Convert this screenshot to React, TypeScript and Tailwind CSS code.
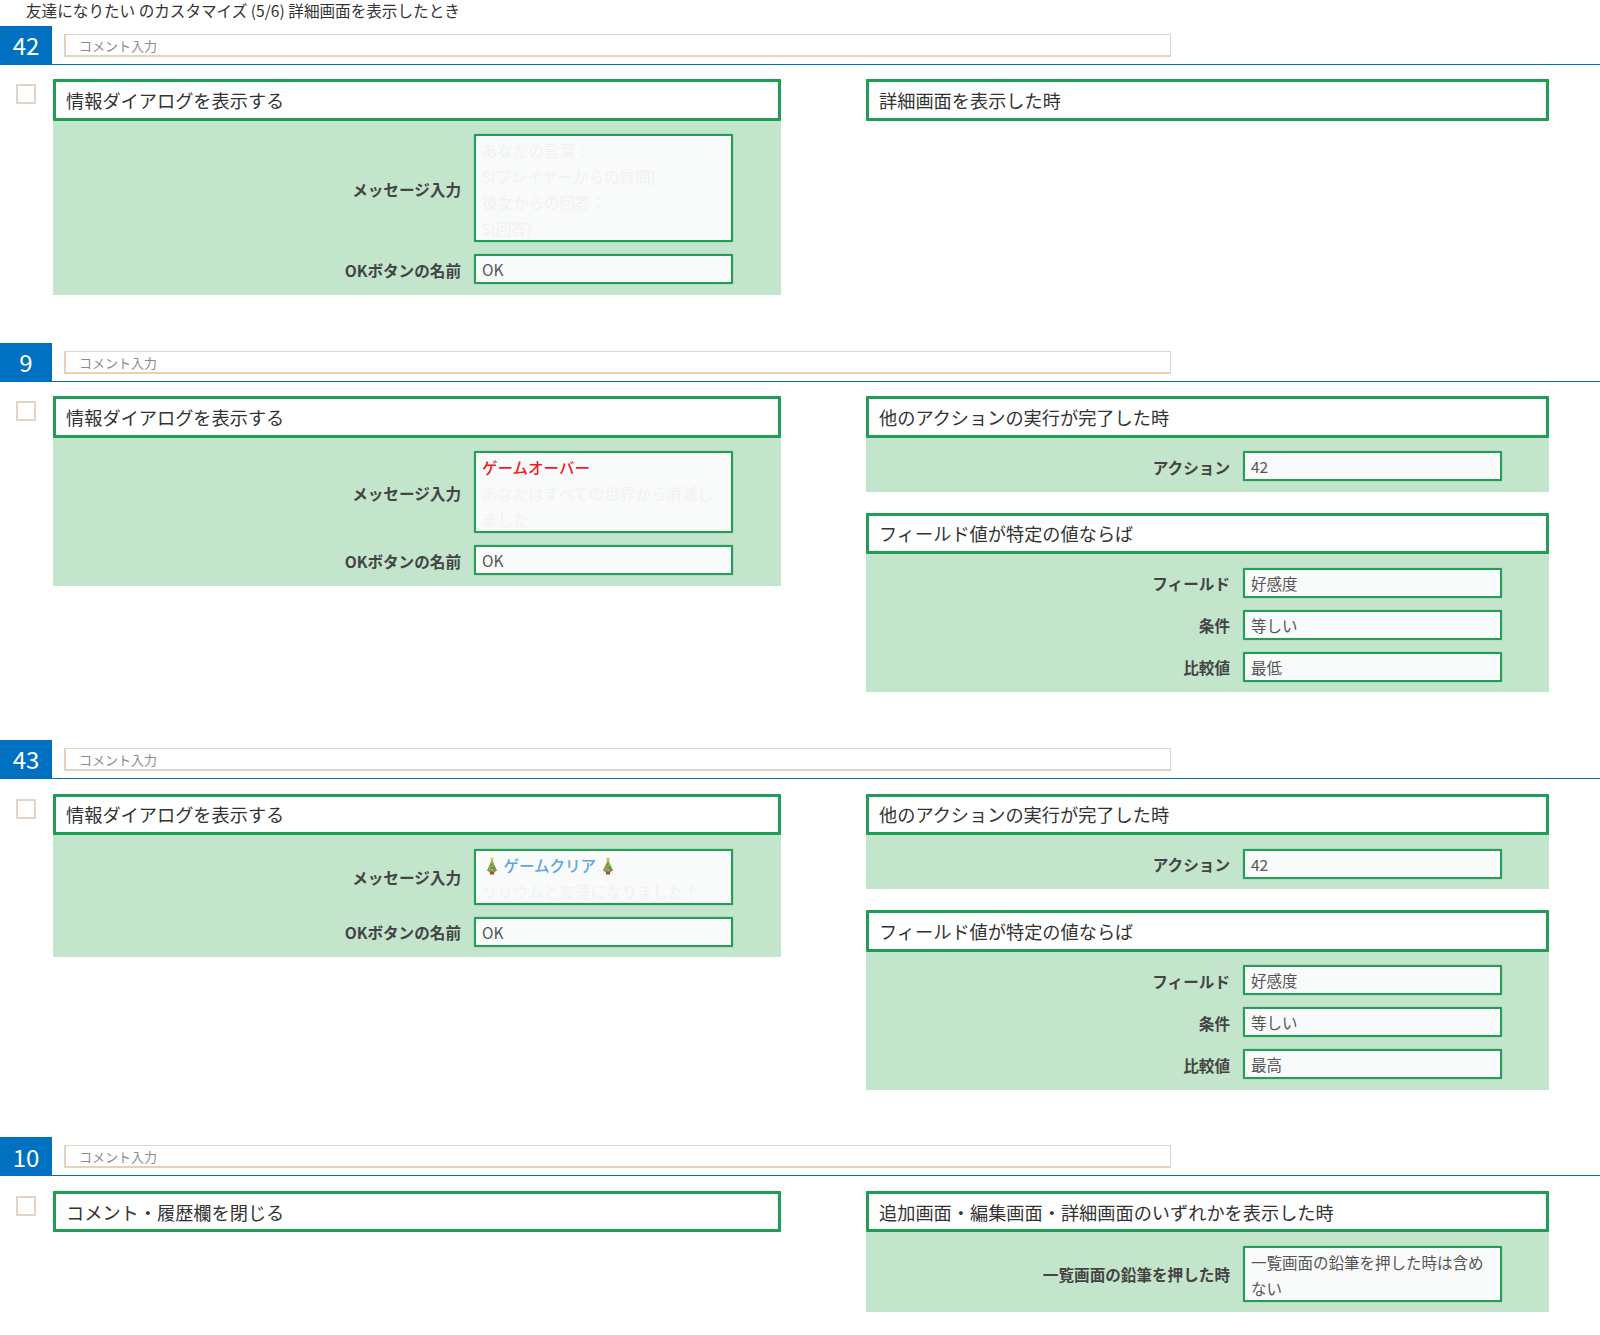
const FONT = "font-['Noto_Sans_CJK_JP','Noto_Sans',sans-serif]";

function Tree({ className = "" }: { className?: string }) {
  return (
    <svg viewBox="0 0 14 18" className={`inline-block w-[14px] h-[18px] align-[-3px] ${className}`}>
      <path d="M7 0l.9 1.4 1.1.3-.8.9.1 1.2L7 3.4l-1.3.4.1-1.2L5 1.7l1.1-.3z" fill="#f2b632" />
      <path d="M7 3L2 13.6c0 .9 2.400 1.400 5 1.400s5-.5 5-1.400z" fill="#6b9a46" />
      <path d="M7 3L9.500 8.300C9 10 5.500 11 3.600 10.200z" fill="#81ad55" />
      <path d="M4.500 14.500h5l-.6 3h-3.800z" fill="#b4473a" />
      <circle cx="6.200" cy="7.500" r=".8" fill="#d9483b" />
      <circle cx="8.800" cy="11" r=".8" fill="#d9483b" />
      <circle cx="4.800" cy="12" r=".8" fill="#ecc63f" />
      <circle cx="7.200" cy="13" r=".7" fill="#e8e2d0" />
    </svg>
  );
}

function Field({ label, children }: { label: string; children: React.ReactNode }) {
  return (
    <div className="flex items-center justify-end">
      <div className="text-[15.6px] leading-[26px] pt-[1px] font-bold text-[#444444] mr-[13px] whitespace-nowrap">{label}</div>
      <div className="w-[259px] border-2 border-[#229e58] bg-[#f9fbfb] shadow-[0_0_1px_#229e58] px-[6px] text-[15.5px] leading-[26px] text-[#555555] shrink-0 rounded-[1px]">
        {children}
      </div>
    </div>
  );
}

const F = ({ t }: { t: string }) => <div className="text-[#f0f1f1]">{t}</div>;
const Tall = ({ children }: { children: React.ReactNode }) => <div className="pt-[1px] -mb-[1px]">{children}</div>;

type P = { title: string; fields?: { label: string; value: React.ReactNode }[] };

function Panel({ title, fields, pad }: P & { pad: string }) {
  return (
    <div className="bg-[#c3e5cc]">
      <div className="border-[3px] border-[#1f9d55] bg-white h-[41.6px] pl-[10px] pt-[1px] flex items-center text-[18.2px] text-[#333333] rounded-[1px]">
        {title}
      </div>
      {fields && (
        <div className={`pt-[13.4px] pb-[10.5px] ${pad} flex flex-col gap-[12px]`}>
          {fields.map((f) => (
            <Field key={f.label} label={f.label}>{f.value}</Field>
          ))}
        </div>
      )}
    </div>
  );
}

function Section({ no, left, right, h }: { no: string; left: P; right: P[]; h: string }) {
  return (
    <section className={h}>
      <div className="flex border-b border-[#0070c0] h-[39px]">
        <div className="w-[52px] h-[38px] pt-[1px] bg-[#0070c0] text-white text-[24px] font-normal flex items-center justify-center">
          {no}
        </div>
        <div className="ml-[12px] mt-[8px] w-[1107px] h-[23px] border-2 border-t border-r border-[#e2d2c2] pl-[13px] text-[13px] leading-[21px] text-[#8a8a8a]">
          コメント入力
        </div>
      </div>
      <div className="flex mt-[14.6px]">
        <div className="w-[53px] shrink-0 pl-[16px] pt-[5px]">
          <div className="w-[20px] h-[20px] border-2 border-[#e2d5c8] bg-white rounded-[1px]" />
        </div>
        <div className="w-[728px] shrink-0">
          <Panel {...left} pad="pr-[48px]" />
        </div>
        <div className="w-[683px] ml-[85px] shrink-0 flex flex-col gap-[21px]">
          {right.map((r) => (
            <Panel key={r.title} {...r} pad="pr-[47px]" />
          ))}
        </div>
      </div>
    </section>
  );
}

const ok = { label: "OKボタンの名前", value: "OK" };
const action = { title: "他のアクションの実行が完了した時", fields: [{ label: "アクション", value: "42" }] };
const fieldIs = (v: string) => ({
  title: "フィールド値が特定の値ならば",
  fields: [
    { label: "フィールド", value: "好感度" },
    { label: "条件", value: "等しい" },
    { label: "比較値", value: v },
  ],
});

export default function App() {
  return (
    <div className={`${FONT} bg-white w-[1600px] h-[1335px] overflow-hidden`}>
      <div className="h-[25.7px] pl-[26px] text-[15.6px] leading-[21px] text-[#333333] whitespace-nowrap">
        友達になりたい のカスタマイズ (5/6) 詳細画面を表示したとき
      </div>
      <Section
        no="42"
        h="h-[317px]"
        left={{
          title: "情報ダイアログを表示する",
          fields: [
            {
              label: "メッセージ入力",
              value: (
                <Tall>
                  <F t="あなたの言葉：" />
                  <F t="${プレイヤーからの質問}" />
                  <F t="彼女からの回答：" />
                  <F t="${回答}" />
                </Tall>
              ),
            },
            ok,
          ],
        }}
        right={[{ title: "詳細画面を表示した時" }]}
      />
      <Section
        no="9"
        h="h-[397.3px]"
        left={{
          title: "情報ダイアログを表示する",
          fields: [
            {
              label: "メッセージ入力",
              value: (
                <Tall>
                  <div className="text-[#ee1c25] font-medium">ゲームオーバー</div>
                  <F t="あなたはすべての世界から消滅しました" />
                </Tall>
              ),
            },
            ok,
          ],
        }}
        right={[action, fieldIs("最低")]}
      />
      <Section
        no="43"
        h="h-[397.3px]"
        left={{
          title: "情報ダイアログを表示する",
          fields: [
            {
              label: "メッセージ入力",
              value: (
                <Tall>
                  <div className="text-[#5aa5e8] font-medium whitespace-nowrap pl-[3px]">
                    <Tree className="mr-[1px]" /> ゲームクリア <Tree className="ml-[1px]" />
                  </div>
                  <F t="リリウムと友達になりました！" />
                </Tall>
              ),
            },
            ok,
          ],
        }}
        right={[action, fieldIs("最高")]}
      />
      <Section
        no="10"
        h="h-[198px]"
        left={{ title: "コメント・履歴欄を閉じる" }}
        right={[
          {
            title: "追加画面・編集画面・詳細画面のいずれかを表示した時",
            fields: [{ label: "一覧画面の鉛筆を押した時", value: <Tall>一覧画面の鉛筆を押した時は含めない</Tall> }],
          },
        ]}
      />
    </div>
  );
}
